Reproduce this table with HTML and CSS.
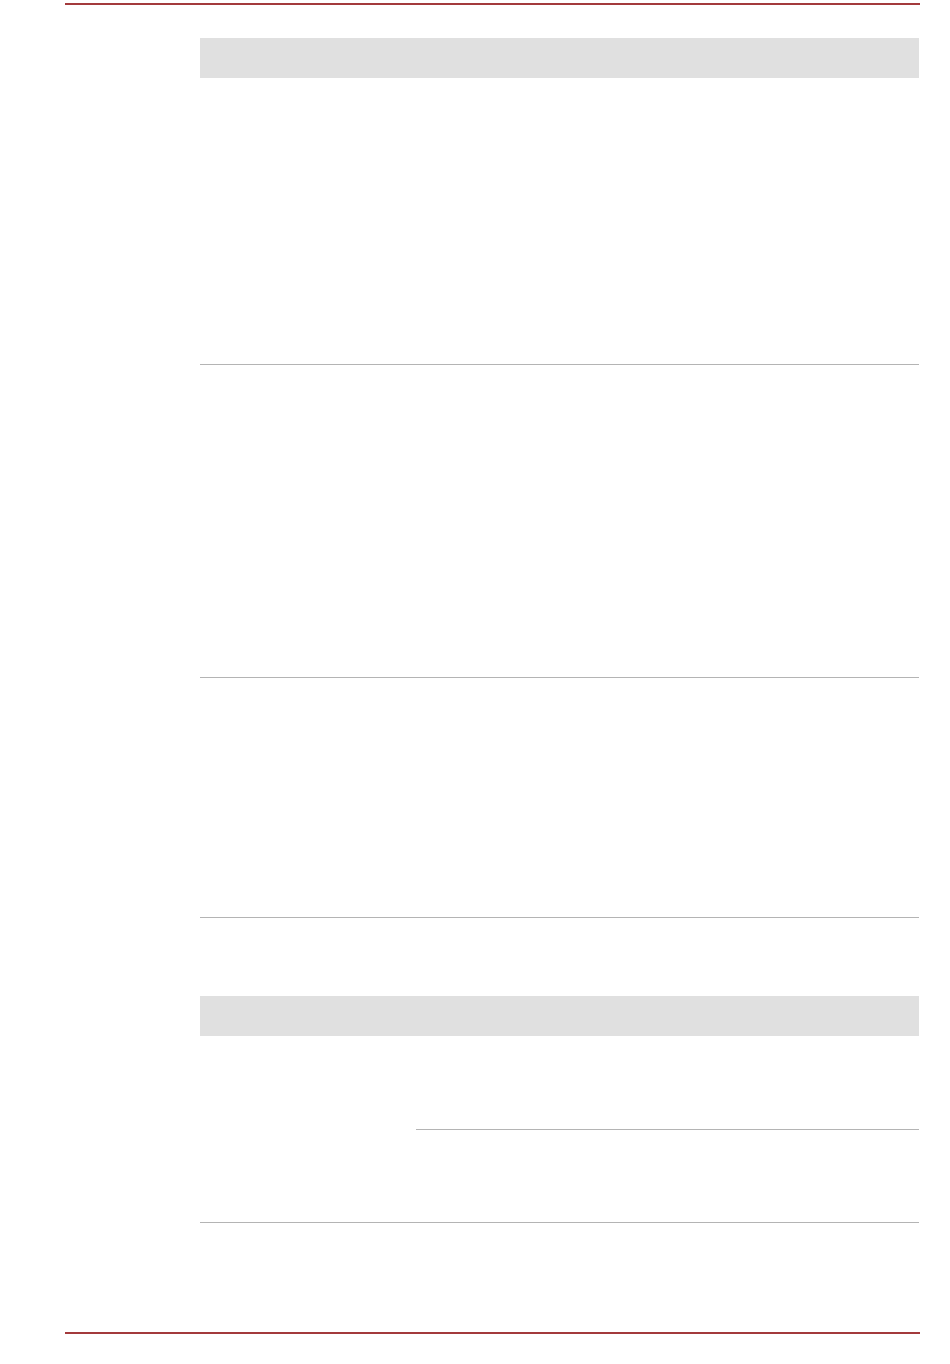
FILE: index.html
```html
<!DOCTYPE html>
<html lang="en">
  <head>
    <meta charset="UTF-8" />
    <meta name="viewport" content="width=device-width, initial-scale=1.0" />
    <title>Document</title>
    <link rel="stylesheet" href="styles.css">
  </head>
  <body>
    <div class="page">
      <div class="rule top"></div>
      <div class="content">
        <div class="table first">
          <div class="head"></div>
          <div class="row r1"></div>
          <div class="row r2"></div>
          <div class="row r3"></div>
        </div>
        <div class="table second">
          <div class="head"></div>
          <div class="split">
            <div class="label"></div>
            <div class="cell c1"></div>
            <div class="cell c2"></div>
          </div>
        </div>
      </div>
      <div class="rule bottom"></div>
    </div>
  </body>
</html>
```

FILE: styles.css
```css
* {
  margin: 0;
  padding: 0;
  box-sizing: border-box;
}
body {
  background: #fff;
  font-family: "Liberation Sans", Arial, sans-serif;
}
.page {
  width: 950px;
  height: 1364px;
}
.rule {
  height: 2px;
  width: 855px;
  margin-left: 65px;
  background: #a33a3c;
}
.rule.top {
  margin-top: 3px;
}
.rule.bottom {
  margin-top: 109px;
}
.content {
  margin-left: 200px;
  width: 719px;
}
.table.first {
  margin-top: 33px;
}
.table.second {
  margin-top: 78px;
}
.head {
  height: 40px;
  background: #e0e0e0;
}
.row {
  border-bottom: 1px solid #b4b4b4;
}
.r1 {
  height: 287px;
}
.r2 {
  height: 313px;
}
.r3 {
  height: 240px;
}
.split {
  display: grid;
  grid-template-columns: 216px 1fr;
  grid-template-rows: 94px 93px;
}
.split .label {
  grid-row: 1 / 3;
  border-bottom: 1px solid #b4b4b4;
}
.split .cell {
  border-bottom: 1px solid #b4b4b4;
}
```
